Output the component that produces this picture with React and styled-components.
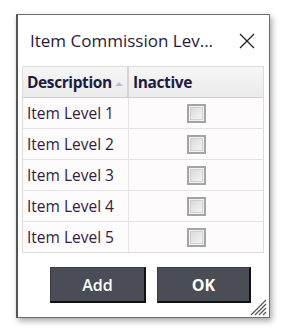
import React from 'react';
import styled, { createGlobalStyle } from 'styled-components';

const GlobalStyle = createGlobalStyle`
  html, body {
    margin: 0;
    padding: 0;
    background: #ffffff;
    font-family: "Open Sans", "Noto Sans", sans-serif;
  }
`;

const Page = styled.div`
  width: 283px;
  height: 335px;
  padding: 14px 0 0 16px;
  box-sizing: border-box;
`;

const Dialog = styled.div`
  width: 254px;
  height: 304px;
  box-sizing: border-box;
  background: #ffffff;
  border: 1px solid #6b6b6b;
  border-left: 2px solid #555;
  box-shadow: 2px 3px 6px rgba(0, 0, 0, 0.35);
  display: flex;
  flex-direction: column;
  position: relative;
`;

const TitleBar = styled.div`
  height: 51px;
  display: flex;
  align-items: center;
  justify-content: space-between;
  padding: 0 13px 0 12px;
  box-sizing: border-box;
`;

const Title = styled.div`
  font-size: 17px;
  color: #2a1a3a;
`;

const Close = styled.div`
  width: 18px;
  height: 18px;
  display: flex;
  align-items: center;
  justify-content: center;
`;

const Table = styled.div`
  margin: 0 5px 0 4px;
  border: 1px solid #dcdcdc;
  display: grid;
  grid-template-columns: 106px 1fr;
`;

const HeadCell = styled.div`
  height: 30px;
  display: flex;
  align-items: center;
  padding-left: 4px;
  font-size: 15.5px;
  font-weight: 700;
  color: #1c1c40;
  background: linear-gradient(#f6f6f6, #ebebeb);
  border-bottom: 1px solid #d0d0d0;
  border-right: ${p => (p.$last ? 'none' : '2px solid #d4d4d4')};
  position: relative;
  letter-spacing: -0.4px;
`;

const SortMark = styled.span`
  position: absolute;
  right: 4px;
  top: 15px;
  width: 0;
  height: 0;
  border-left: 4px solid transparent;
  border-right: 4px solid transparent;
  border-bottom: 4px solid #b8c0cc;
`;

const Cell = styled.div`
  height: 30px;
  display: flex;
  align-items: center;
  justify-content: ${p => (p.$center ? 'center' : 'flex-start')};
  padding-left: ${p => (p.$center ? '0' : '4px')};
  font-size: 15.5px;
  color: #33203f;
  background: #fefbfd;
  border-bottom: ${p => (p.$lastRow ? 'none' : '1px solid #e4e2e4')};
  border-right: ${p => (p.$center ? 'none' : '1px solid #e4e2e4')};
`;

const Check = styled.div`
  width: 19px;
  height: 19px;
  box-sizing: border-box;
  border: 2px solid #a4a4a4;
  background: linear-gradient(135deg, #d6d6d6, #f8f8f8);
  box-shadow: inset 0 0 0 1px #f2f2f2, inset 0 0 0 2px #d0d0d0;
`;

const Buttons = styled.div`
  display: flex;
  gap: 11px;
  padding: 14px 0 0 32px;
`;

const Button = styled.button`
  width: ${p => p.$w}px;
  height: 36px;
  box-sizing: border-box;
  background: #4a4d56;
  border: 1px solid #3a3c42;
  border-right: 2px solid #111;
  border-bottom: 2px solid #111;
  color: #ffffff;
  font-family: "Open Sans", "Noto Sans", sans-serif;
  font-size: 16px;
  font-weight: ${p => (p.$bold ? 700 : 600)};
  padding: 0;
`;

const Grip = styled.svg`
  position: absolute;
  right: 2px;
  bottom: 1px;
`;

const rows = ['Item Level 1', 'Item Level 2', 'Item Level 3', 'Item Level 4', 'Item Level 5'];

export default function App() {
  return (
    <>
      <GlobalStyle />
      <Page>
        <Dialog>
          <TitleBar>
            <Title>Item Commission Lev...</Title>
            <Close>
              <svg width="16" height="16" viewBox="0 0 16 16">
                <path d="M1 1 L15 15 M15 1 L1 15" stroke="#222" strokeWidth="1.3" />
              </svg>
            </Close>
          </TitleBar>
          <Table>
            <HeadCell>Description<SortMark /></HeadCell>
            <HeadCell $last>Inactive</HeadCell>
            {rows.map((r, i) => (
              <React.Fragment key={r}>
                <Cell $lastRow={i === rows.length - 1}>{r}</Cell>
                <Cell $center $lastRow={i === rows.length - 1}><Check /></Cell>
              </React.Fragment>
            ))}
          </Table>
          <Buttons>
            <Button $w={96}>Add</Button>
            <Button $w={94} $bold>OK</Button>
          </Buttons>
          <Grip width="18" height="18" viewBox="0 0 18 18">
            <path d="M17 2 L2 17 M17 6 L6 17 M17 10 L10 17 M17 14 L14 17" stroke="#555" strokeWidth="1.2" />
          </Grip>
        </Dialog>
      </Page>
    </>
  );
}
